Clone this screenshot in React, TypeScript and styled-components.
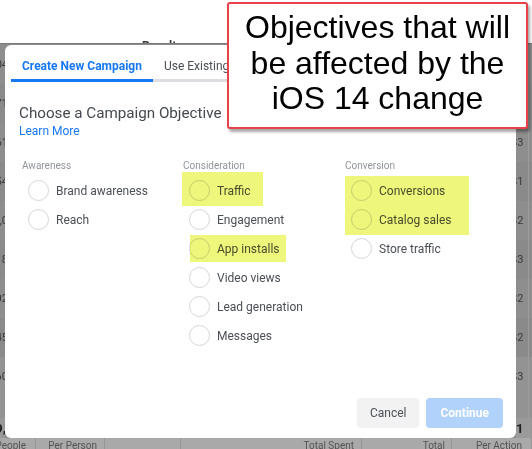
import React from "react";
import styled, { createGlobalStyle } from "styled-components";

const Global = createGlobalStyle`
  html, body { margin: 0; padding: 0; background: #fff; }
  body { font-family: Roboto, "Liberation Sans", Arial, sans-serif; }
  * { box-sizing: border-box; }
`;

const Page = styled.div`
  position: relative;
  width: 532px;
  height: 449px;
  overflow: hidden;
  display: flex;
  flex-direction: column;
  background: #fff;
`;

/* white strip above the dimmed report table */
const TopBand = styled.div`
  flex: none;
  height: 43px;
  display: flex;
  align-items: flex-end;
  padding-left: 142px;
`;

const HeaderPeek = styled.span`
  font-size: 12px;
  line-height: 12px;
  font-weight: 700;
  color: #3a3a3a;
  margin-bottom: -9px;
`;

/* dark overlay behind the dialog */
const Scrim = styled.div`
  flex: 1;
  display: flex;
  flex-direction: column;
  background: #8c8c8c;
  border-top: 1px solid #7c7c7c;
`;

const ModalRow = styled.div`
  flex: none;
  height: 394px;
  padding-top: 1px;
  display: flex;
`;

const SideStrip = styled.div<{ $w?: number }>`
  flex: ${(p) => (p.$w ? `none` : 1)};
  width: ${(p) => (p.$w ? `${p.$w}px` : "auto")};
  overflow: hidden;
  display: flex;
  flex-direction: column;
`;

const BgRow = styled.div<{ $h: number; $tone: string; $end?: boolean }>`
  flex: none;
  height: ${(p) => p.$h}px;
  background: ${(p) => p.$tone};
  display: flex;
  align-items: center;
  justify-content: ${(p) => (p.$end ? "flex-end" : "flex-start")};
  overflow: hidden;
`;

const BgCell = styled.div`
  width: 13px;
  height: 100%;
  display: flex;
  align-items: center;
  overflow: hidden;
  border-right: 1px solid #9c9c9c;
`;

const BgText = styled.span<{ $bold?: boolean; $shift: number }>`
  white-space: nowrap;
  font-size: ${(p) => (p.$bold ? 13 : 11)}px;
  font-weight: ${(p) => (p.$bold ? 700 : 400)};
  color: ${(p) => (p.$bold ? "#1e1e1e" : "#383838")};
  margin-left: ${(p) => (p.$shift < 0 ? p.$shift : 0)}px;
  margin-right: ${(p) => (p.$shift > 0 ? -p.$shift : 0)}px;
`;

const TableFoot = styled.div`
  flex: 1;
  display: flex;
  background: #a9a9a9;
  overflow: hidden;
`;

const FootCell = styled.div<{ $w: number; $pad: number }>`
  flex: none;
  width: ${(p) => p.$w}px;
  display: flex;
  justify-content: flex-end;
  padding: 2px ${(p) => p.$pad}px 0 0;
  border-right: 1px solid #959595;
  overflow: hidden;
  white-space: nowrap;
  font-size: 10px;
  line-height: 12px;
  color: #545454;
`;

/* dialog */
const Modal = styled.div`
  position: relative;
  z-index: 1;
  flex: none;
  width: 511px;
  background: #fff;
  border-radius: 6px;
  display: flex;
  flex-direction: column;
`;

const TabBar = styled.div`
  display: flex;
  margin: 0 6px;
`;

const Tab = styled.div<{ $active?: boolean }>`
  height: 37px;
  padding: 13px 11px 0;
  font-size: 12px;
  line-height: 16px;
  white-space: nowrap;
  font-weight: ${(p) => (p.$active ? 700 : 400)};
  color: ${(p) => (p.$active ? "#1877f2" : "#4b4f56")};
  border-bottom: 3px solid ${(p) => (p.$active ? "#1877f2" : "#dcdee1")};
`;

const TabFill = styled.div`
  flex: 1;
  border-bottom: 3px solid #dcdee1;
`;

const Body = styled.div`
  padding: 21px 14px 0;
`;

const Title = styled.h2`
  margin: 0;
  font-size: 15.2px;
  line-height: 20px;
  font-weight: 400;
  color: #444950;
`;

const LearnMore = styled.a`
  display: block;
  font-size: 12px;
  line-height: 16px;
  color: #1877f2;
  text-decoration: none;
`;

const Columns = styled.div`
  display: grid;
  grid-template-columns: 161px 162px 1fr;
  margin: 20px 0 0 3px;
`;

const Group = styled.div`
  display: flex;
  flex-direction: column;
`;

const GroupLabel = styled.div`
  font-size: 10px;
  line-height: 14px;
  color: #90949c;
  margin-bottom: 3px;
`;

const Option = styled.label`
  height: 29px;
  display: flex;
  align-items: center;
  gap: 7px;
  padding-left: 6px;
  font-size: 12px;
  color: #4b4f56;
  white-space: nowrap;
`;

const Radio = styled.span`
  flex: none;
  width: 21px;
  height: 21px;
  border-radius: 50%;
  border: 1px solid #d3d6db;
  background: #fff;
`;

const Footer = styled.div`
  margin-top: auto;
  display: flex;
  justify-content: flex-end;
  gap: 7px;
  padding: 0 13px 10px;
`;

const Button = styled.button<{ $primary?: boolean }>`
  height: 30px;
  border: none;
  border-radius: 4px;
  padding: 0 ${(p) => (p.$primary ? 14 : 13)}px;
  font-family: inherit;
  font-size: 12px;
  font-weight: ${(p) => (p.$primary ? 700 : 400)};
  background: ${(p) => (p.$primary ? "#b1d3fb" : "#f2f2f2")};
  color: ${(p) => (p.$primary ? "#ffffff" : "#4b4f56")};
`;

/* marker-pen highlights laid over the options */
const Marker = styled.div`
  position: absolute;
  z-index: 2;
  background: #eff67c;
  mix-blend-mode: multiply;
  pointer-events: none;
`;

/* annotation callout */
const Callout = styled.div`
  position: absolute;
  z-index: 3;
  left: 227px;
  top: 2px;
  width: 301px;
  height: 127px;
  padding-top: 6px;
  background: #fff;
  border: 2px solid #e8414a;
  border-radius: 3px;
  box-shadow: 2px 3px 3px rgba(0, 0, 0, 0.35);
  font-family: "Liberation Sans", Arial, sans-serif;
  font-size: 32px;
  line-height: 35.5px;
  color: #000;
  text-align: center;
`;

const groups = [
  { label: "Awareness", items: ["Brand awareness", "Reach"] },
  {
    label: "Consideration",
    items: ["Traffic", "Engagement", "App installs", "Video views", "Lead generation", "Messages"],
  },
  { label: "Conversion", items: ["Conversions", "Catalog sales", "Store traffic"] },
];

const leftRows = [
  { h: 39, tone: "#8e8e8e", t: "12,504" },
  { h: 39, tone: "#8a8a8a", t: "3,871" },
  { h: 39, tone: "#8e8e8e", t: "961" },
  { h: 39, tone: "#8a8a8a", t: "2,054" },
  { h: 39, tone: "#8e8e8e", t: "1,0" },
  { h: 39, tone: "#8a8a8a", t: "7,318" },
  { h: 39, tone: "#8e8e8e", t: "4,102" },
  { h: 39, tone: "#8a8a8a", t: "845" },
  { h: 39, tone: "#939393", t: "5,260" },
  { h: 22, tone: "#939393", t: "" },
];

const rightRows = [
  { h: 39, tone: "#8e8e8e", t: "$3" },
  { h: 39, tone: "#8a8a8a", t: "$2" },
  { h: 39, tone: "#8e8e8e", t: "$3" },
  { h: 39, tone: "#8a8a8a", t: "$1" },
  { h: 39, tone: "#8e8e8e", t: "$2" },
  { h: 39, tone: "#8a8a8a", t: "$3" },
  { h: 39, tone: "#8e8e8e", t: "$2" },
  { h: 39, tone: "#8a8a8a", t: "$2" },
  { h: 39, tone: "#939393", t: "$3" },
  { h: 22, tone: "#939393", t: "" },
];

const footCells = [
  { w: 36, pad: 9, t: "People" },
  { w: 69, pad: 7, t: "Per Person" },
  { w: 76, pad: 7, t: "" },
  { w: 181, pad: 7, t: "Total Spent" },
  { w: 90, pad: 6, t: "Total" },
  { w: 80, pad: 9, t: "Per Action" },
];

export default function App() {
  return (
    <>
      <Global />
      <Page>
        <TopBand>
          <HeaderPeek>Result</HeaderPeek>
        </TopBand>
        <Scrim>
          <ModalRow>
            <SideStrip $w={5}>
              {leftRows.map((r, i) => (
                <BgRow key={i} $h={r.h} $tone={r.tone} $end>
                  <BgText $shift={3}>{r.t}</BgText>
                </BgRow>
              ))}
              <BgRow $h={20} $tone="#9a9a9a" $end>
                <BgText $bold $shift={1}>19,</BgText>
              </BgRow>
            </SideStrip>

            <Modal>
              <TabBar>
                <Tab $active>Create New Campaign</Tab>
                <Tab>Use Existing Campaign</Tab>
                <TabFill />
              </TabBar>
              <Body>
                <Title>Choose a Campaign Objective</Title>
                <LearnMore href="#">Learn More</LearnMore>
                <Columns>
                  {groups.map((g) => (
                    <Group key={g.label}>
                      <GroupLabel>{g.label}</GroupLabel>
                      {g.items.map((it) => (
                        <Option key={it}>
                          <Radio />
                          {it}
                        </Option>
                      ))}
                    </Group>
                  ))}
                </Columns>
              </Body>
              <Footer>
                <Button>Cancel</Button>
                <Button $primary>Continue</Button>
              </Footer>
            </Modal>

            <SideStrip>
              {rightRows.map((r, i) => (
                <BgRow key={i} $h={r.h} $tone={r.tone}>
                  <BgCell>
                    <BgText $shift={-5}>{r.t}</BgText>
                  </BgCell>
                </BgRow>
              ))}
              <BgRow $h={20} $tone="#9a9a9a">
                <BgCell>
                  <BgText $bold $shift={2}>1</BgText>
                </BgCell>
              </BgRow>
            </SideStrip>
          </ModalRow>
          <TableFoot>
            {footCells.map((c, i) => (
              <FootCell key={i} $w={c.w} $pad={c.pad}>
                {c.t}
              </FootCell>
            ))}
          </TableFoot>
        </Scrim>

        <Marker style={{ left: 182, top: 172, width: 81, height: 34 }} />
        <Marker style={{ left: 190, top: 235, width: 96, height: 27 }} />
        <Marker style={{ left: 345, top: 176, width: 124, height: 59 }} />

        <Callout>
          Objectives that will
          <br />
          be affected by the
          <br />
          iOS 14 change
        </Callout>
      </Page>
    </>
  );
}
